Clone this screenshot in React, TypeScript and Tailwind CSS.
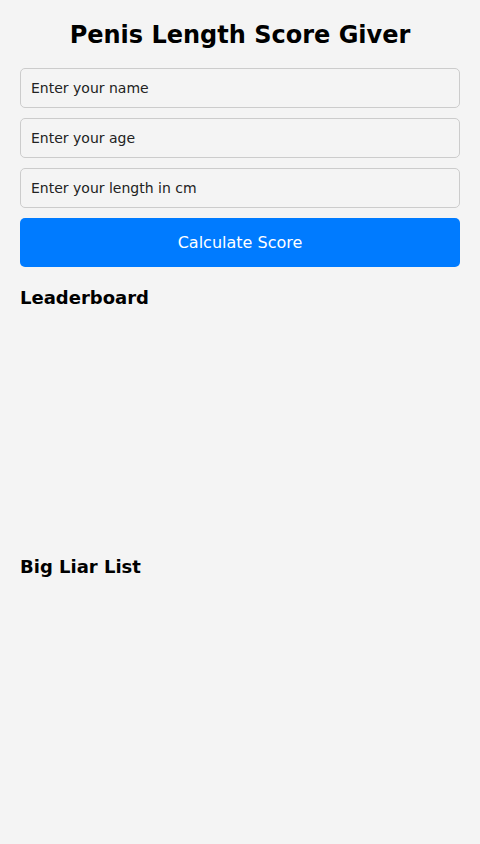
import { useState } from "react";

const fields = [
  { key: "name", placeholder: "Enter your name", type: "text" },
  { key: "age", placeholder: "Enter your age", type: "number" },
  { key: "length", placeholder: "Enter your length in cm", type: "number" },
];

const App = () => {
  const [values, setValues] = useState<Record<string, string>>({});

  return (
    <div className="min-h-[844px] bg-[#f4f4f4] px-5 pt-5 font-['DejaVu_Sans',sans-serif] text-black">
      <h1 className="text-center text-[24px] font-bold leading-[30px] mb-[18px]">Penis Length Score Giver</h1>

      {fields.map((f) => (
        <input
          key={f.key}
          type="text"
          placeholder={f.placeholder}
          value={values[f.key] || ""}
          onChange={(e) => setValues({ ...values, [f.key]: e.target.value })}
          className="block w-full h-10 mb-[10px] px-[10px] border border-[#ccc] rounded-[5px] bg-[#f4f4f4] text-[14px] text-[#222] placeholder:text-[#222] outline-none"
        />
      ))}

      <button className="block w-full h-[49px] bg-[#007bff] text-white text-[16px] rounded-[5px]">
        Calculate Score
      </button>

      <h2 className="mt-5 text-[18px] font-bold leading-[21px]">Leaderboard</h2>
      <div className="h-[248px]"></div>

      <h2 className="text-[18px] font-bold leading-[21px]">Big Liar List</h2>
    </div>
  );
};

export default App;
